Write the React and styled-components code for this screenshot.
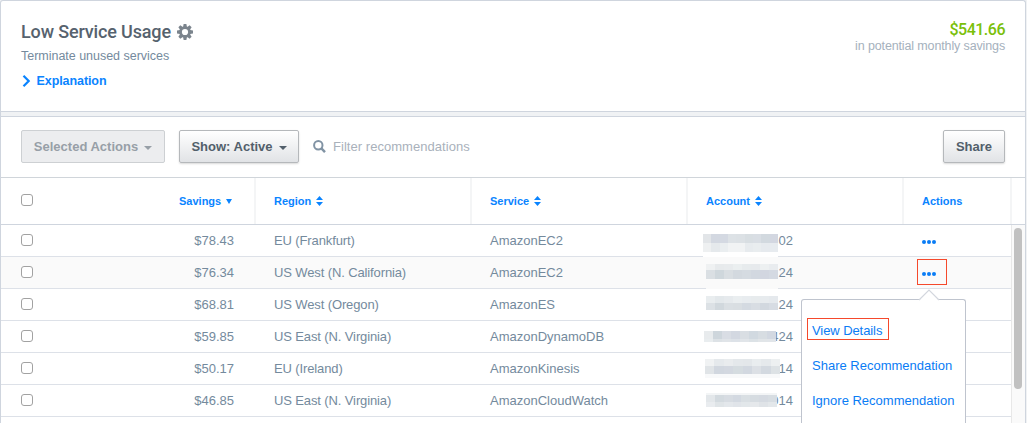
import React from 'react';
import styled, { createGlobalStyle } from 'styled-components';

const Global = createGlobalStyle`
  *, *::before, *::after { box-sizing: border-box; }
  body {
    margin: 0;
    overflow: hidden;
    background: #f0f2f4;
    font-family: "Liberation Sans", Arial, sans-serif;
    font-size: 13px;
    color: #748a9d;
  }
`;

const Panel = styled.main`
  width: 1026px;
  height: 423px;
  overflow: hidden;
  display: flex;
  flex-direction: column;
  background: #fff;
  border: 1px solid #cfd5de;
  border-bottom: 0;
  border-radius: 3px 3px 0 0;
`;

const Header = styled.header`
  height: 111px;
  flex: none;
  display: flex;
  justify-content: space-between;
  padding: 20px 20px 0;
  border-bottom: 1px solid #cfd5de;
`;

const Title = styled.h1`
  margin: 0;
  height: 22px;
  display: flex;
  align-items: center;
  gap: 6px;
  font: 500 18px/22px Roboto, sans-serif;
  letter-spacing: -0.15px;
  color: #56626e;
  white-space: nowrap;
`;

const Subtitle = styled.p`
  margin: 4px 0 0;
  line-height: 18px;
  font-size: 12.5px;
  letter-spacing: -0.02px;
`;

const Explanation = styled.a`
  margin-top: 7px;
  display: flex;
  align-items: center;
  gap: 5.5px;
  line-height: 18px;
  font-size: 12.5px;
  letter-spacing: -0.08px;
  font-weight: 700;
  color: #0a84ff;
`;

const Totals = styled.div`
  text-align: right;
  color: #a5b1bd;
  line-height: 16px;
  font-size: 12.5px;
  letter-spacing: -0.13px;
`;

const Amount = styled.div`
  font: 500 16px/17px Roboto, sans-serif;
  letter-spacing: -0.5px;
  color: #7ac00a;
`;

const Band = styled.div`
  height: 5px;
  flex: none;
  background: #f0f2f4;
  border-bottom: 1px solid #cfd5de;
`;

const Toolbar = styled.div`
  height: 61px;
  flex: none;
  display: flex;
  align-items: center;
  padding: 0 20px 1px;
  border-bottom: 1px solid #d0d5da;
`;

const Button = styled.button`
  height: 33px;
  width: ${(p) => p.$width}px;
  margin: 0 14px 0 0;
  padding: 0;
  display: flex;
  align-items: center;
  justify-content: center;
  gap: 6px;
  font: 700 13px/16px "Liberation Sans", Arial, sans-serif;
  white-space: nowrap;
  border-radius: 2px;
  color: ${(p) => (p.disabled ? '#979fa7' : '#525f6b')};
  border: 1px solid ${(p) => (p.disabled ? '#cdd0d3' : '#b5b8bb')};
  background: ${(p) => (p.disabled ? '#ecedef' : 'linear-gradient(#fff, #e1e3e6)')};
  box-shadow: ${(p) => (p.disabled ? 'none' : '0 1px 2px rgba(0, 0, 0, 0.15)')};
  &:last-child { margin: 0 0 0 auto; }
`;

const Caret = styled.i`
  width: 0;
  height: 0;
  margin-top: ${(p) => (p.$size === 4 ? 2 : 0)}px;
  border: ${(p) => p.$size}px solid transparent;
  border-width: ${(p) => p.$size}px ${(p) => (p.$size === 4 ? 4 : 3)}px 0;
  border-top-color: currentColor;
`;

const Search = styled.label`
  display: flex;
  align-items: center;
  gap: 7px;
  color: #a9b1bb;
  letter-spacing: 0.04px;
`;

const HeadRow = styled.div`
  height: 47px;
  flex: none;
  display: grid;
  grid-template-columns: 255px 216px 216px 216px 108px 1fr;
  border-bottom: 1px solid #cfd5de;
  font-size: 11px;
  font-weight: 700;
  color: #0a84ff;
`;

const HeadCell = styled.div`
  display: flex;
  align-items: center;
  gap: 5px;
  padding: 0 0 0 ${(p) => (p.$first ? 20 : 18)}px;
  border-right: 2px solid #f4f5f6;
  &:last-child { border: 0; }
`;

const SavingsLabel = styled.span`
  display: flex;
  align-items: center;
  gap: 5px;
  margin-left: 141px;
`;

const Check = styled.input.attrs({ type: 'checkbox' })`
  appearance: none;
  width: 12px;
  height: 12px;
  margin: 0 0 2px;
  background: #fff;
  border: 1px solid #a2a2a2;
  border-radius: 3px;
`;

const Body = styled.div`
  display: flex;
  flex: 1;
  min-height: 0;
`;

const Rows = styled.div`
  width: 1010px;
`;

const Row = styled.div`
  height: 32px;
  display: grid;
  grid-template-columns: 254px 216px 216px 216px 108px;
  background: ${(p) => (p.$active ? '#fafafa' : '#fff')};
  border-bottom: 1px solid #dde1e8;
`;

const Cell = styled.div`
  position: relative;
  display: flex;
  align-items: center;
  padding-left: 19px;
  white-space: nowrap;
`;

const RegionCell = styled(Cell)`
  letter-spacing: -0.12px;
`;

const LeadCell = styled(Cell)`
  justify-content: space-between;
  padding: 0 21px 0 20px;
`;

const AccountNumber = styled.span`
  width: 87px;
  text-align: right;
`;

const Mask = styled.div`
  position: absolute;
  left: ${(p) => p.$x}px;
  top: ${(p) => p.$y}px;
  width: ${(p) => p.$w}px;
`;

const MaskBand = styled.div`
  height: ${(p) => p.$h}px;
  background: ${(p) => p.$fill};
`;

const Dots = styled.button`
  display: flex;
  align-items: center;
  justify-content: center;
  gap: 1px;
  width: 30px;
  height: 26px;
  margin: -2px 0 0 -5px;
  padding: 4px 7px 0 0;
  background: none;
  border: 1px solid ${(p) => (p.$marked ? '#f5492c' : 'transparent')};
`;

const Dot = styled.i`
  width: 4px;
  height: 4px;
  border-radius: 50%;
  background: #0a7cf5;
`;

const Scroll = styled.div`
  width: 14px;
  padding: 3px 0 0 2px;
  background: #fafafa;
  border-left: 1px solid #e8e8e8;
`;

const Thumb = styled.div`
  width: 8px;
  height: 161px;
  border-radius: 4px;
  background: #c1c1c1;
`;

const Menu = styled.div`
  position: absolute;
  left: 801px;
  top: 299px;
  width: 165px;
  height: 124px;
  padding: 18px 0 0 5px;
  display: flex;
  flex-direction: column;
  align-items: flex-start;
  gap: 13px;
  background: #fff;
  border: 1px solid #bfc4ce;
  border-bottom: 0;
  border-radius: 3px 3px 0 0;
`;

const Pointer = styled.svg`
  position: absolute;
  left: 116px;
  top: -11px;
`;

const MenuItem = styled.a`
  height: 22px;
  padding: 1px ${(p) => (p.$marked ? 6 : 0)}px 0 4px;
  line-height: 21px;
  color: #0a7cf5;
  white-space: nowrap;
  letter-spacing: ${(p) => (p.$marked ? -0.08 : 0)}px;
  border: 1px solid ${(p) => (p.$marked ? '#f5492c' : 'transparent')};
`;

// Evenly spaced hard colour stops across one strip.
const strip = (colors) =>
  `linear-gradient(90deg, ${colors
    .map((c, i) => `${c} ${(i * 100) / colors.length}% ${((i + 1) * 100) / colors.length}%`)
    .join(', ')})`;

const recommendations = [
  {
    savings: '$78.43', region: 'EU (Frankfurt)', service: 'AmazonEC2', account: '02',
    mask: { x: 16, y: 9, w: 75, bands: [
      [9, ['#e2e5e8', '#d3d8e1', '#d4d9e2', '#dde2e6', '#dce1e5', '#d8dee2', '#d9dee4', '#d2d9df', '#d3d7e1']],
      [9, ['#eef0f1', '#e5e9ec', '#eaeef0', '#f1f3f4', '#f1f3f4', '#e7ebee', '#e9edef', '#e6eaee', '#e7ebef']],
      [5, ['#fff']]] },
  },
  {
    savings: '$76.34', region: 'US West (N. California)', service: 'AmazonEC2', account: '24', active: true,
    mask: { x: 19, y: 7, w: 72, bands: [
      [6, ['#eff1f2', '#e7eaec', '#e8ebed', '#ebeff0', '#e7ebed', '#e7eaed', '#edf0f1', '#e9ecef']],
      [9, ['#dadfe3', '#cfd7dc', '#d9dee2', '#d3d9df', '#d5dbe1', '#d2d8e0', '#d2d6e0', '#d4d9e2']],
      [10, ['#fafafa']]] },
  },
  {
    savings: '$68.81', region: 'US West (Oregon)', service: 'AmazonES', account: '24',
    mask: { x: 19, y: 7, w: 72, bands: [
      [7, ['#e9edef', '#e3e8eb', '#e6eaed', '#eaeef0', '#e8ecef', '#e7ebed', '#e7ebee', '#e5e9ed']],
      [7, ['#dce1e5', '#d1d8dd', '#dadfe3', '#d9dee2', '#d4dae1', '#d8dde3', '#d2d8df', '#d7dce3']]] },
  },
  {
    savings: '$59.85', region: 'US East (N. Virginia)', service: 'AmazonDynamoDB', account: '424',
    mask: { x: 17, y: 10, w: 72, bands: [
      [8, ['#e8ebed', '#ced6dc', '#d9dde4', '#d3d8e1', '#d9dee3', '#d1d9e0', '#d7dde2', '#d2d8e1']],
      [3, ['#e9edef', '#dde2e6', '#e0e4e8', '#dde2e8', '#e1e5e9', '#dce2e6', '#e1e5e8', '#e1e5e9']]] },
  },
  {
    savings: '$50.17', region: 'EU (Ireland)', service: 'AmazonKinesis', account: '14',
    mask: { x: 18, y: 6, w: 75, bands: [
      [7, ['#f0f2f3', '#e5e9ec', '#e9ecee', '#e4e8eb', '#e3e7ea', '#e9edef', '#e5e9ec', '#edf0f1']],
      [8, ['#e0e4e7', '#d1d7df', '#d3d8e0', '#d5dce0', '#d2d8e0', '#dce0e5', '#d3d9e0', '#dde2e5']],
      [4, ['#f8f9fa']]] },
  },
  {
    savings: '$46.85', region: 'US East (N. Virginia)', service: 'AmazonCloudWatch', account: '014',
    mask: { x: 19, y: 8, w: 71, bands: [
      [2, ['#f3f5f6']],
      [7, ['#e3e7ea', '#d3dadf', '#d7dce2', '#d3d9e1', '#d9dfe3', '#d6dce1', '#d5dae1', '#d7dde2']],
      [5, ['#e9ecef', '#dfe4e7', '#e3e7eb', '#e0e4e9', '#e2e7ea', '#e5e8eb', '#dfe3e7', '#e3e7ea']]] },
  },
];

const Sorter = () => (
  <svg width="7" height="10" viewBox="0 0 7 10" fill="currentColor">
    <path d="M0 4 3.5 0 7 4zM0 6h7L3.5 10z" />
  </svg>
);

const Gear = () => (
  <svg width="16" height="16" viewBox="0 0 16 16">
    <g fill="#7b848d">
      {[0, 45, 90, 135].map((a) => (
        <path key={a} d="M6.6 0h2.8l.5 3v10l-.5 3H6.600l-.5-3V3z" transform={`rotate(${a} 8 8)`} />
      ))}
      <circle cx="8" cy="8" r="5.8" />
    </g>
    <circle cx="8" cy="8" r="3.1" fill="#fff" />
  </svg>
);

export default function App() {
  return (
    <>
      <Global />
      <Panel>
        <Header>
          <div>
            <Title>Low Service Usage <Gear /></Title>
            <Subtitle>Terminate unused services</Subtitle>
            <Explanation>
              <svg width="10" height="12" viewBox="0 0 10 12" fill="none" stroke="currentColor" strokeWidth="2.2">
                <path d="M2.5 .8 7.700 6l-5.200 5.200" />
              </svg>
              Explanation
            </Explanation>
          </div>
          <Totals>
            <Amount>$541.66</Amount>
            in potential monthly savings
          </Totals>
        </Header>
        <Band />
        <Toolbar>
          <Button disabled $width={144}>Selected Actions <Caret $size={4} /></Button>
          <Button $width={120}>Show: Active <Caret $size={4} /></Button>
          <Search>
            <svg width="13" height="13" viewBox="0 0 13 13" fill="none" stroke="#8193a4" strokeWidth="2">
              <circle cx="5.3" cy="5.3" r="4.2" />
              <path d="m8.4 8.4 3.6 3.8" strokeWidth="2.4" />
            </svg>
            Filter recommendations
          </Search>
          <Button $width={62}>Share</Button>
        </Toolbar>
        <HeadRow>
          <HeadCell $first>
            <Check aria-label="Select all" />
            <SavingsLabel>Savings <Caret $size={5} /></SavingsLabel>
          </HeadCell>
          {['Region', 'Service', 'Account'].map((name) => (
            <HeadCell key={name}>{name} <Sorter /></HeadCell>
          ))}
          <HeadCell>Actions</HeadCell>
          <HeadCell />
        </HeadRow>
        <Body>
          <Rows>
            {recommendations.map((r) => (
              <Row key={r.savings} $active={r.active}>
                <LeadCell><Check aria-label={r.service} /><span>{r.savings}</span></LeadCell>
                <RegionCell>{r.region}</RegionCell>
                <Cell>{r.service}</Cell>
                <Cell>
                  <AccountNumber>{r.account}</AccountNumber>
                  <Mask $x={r.mask.x} $y={r.mask.y} $w={r.mask.w}>
                    {r.mask.bands.map(([h, colors], i) => (
                      <MaskBand key={i} $h={h} $fill={strip(colors)} />
                    ))}
                  </Mask>
                </Cell>
                <Cell>
                  <Dots $marked={r.active} aria-label="Actions"><Dot /><Dot /><Dot /></Dots>
                </Cell>
              </Row>
            ))}
          </Rows>
          <Scroll><Thumb /></Scroll>
        </Body>
      </Panel>
      <Menu>
        <Pointer width="22" height="12" viewBox="0 0 22 12">
          <path d="M1 11.5 11 1l10 10.5V12H1z" fill="#fff" />
          <path d="M1 11 11 1l10 10" fill="none" stroke="#d3d7de" strokeWidth="1.2" />
        </Pointer>
        <MenuItem $marked>View Details</MenuItem>
        <MenuItem>Share Recommendation</MenuItem>
        <MenuItem>Ignore Recommendation</MenuItem>
      </Menu>
    </>
  );
}
